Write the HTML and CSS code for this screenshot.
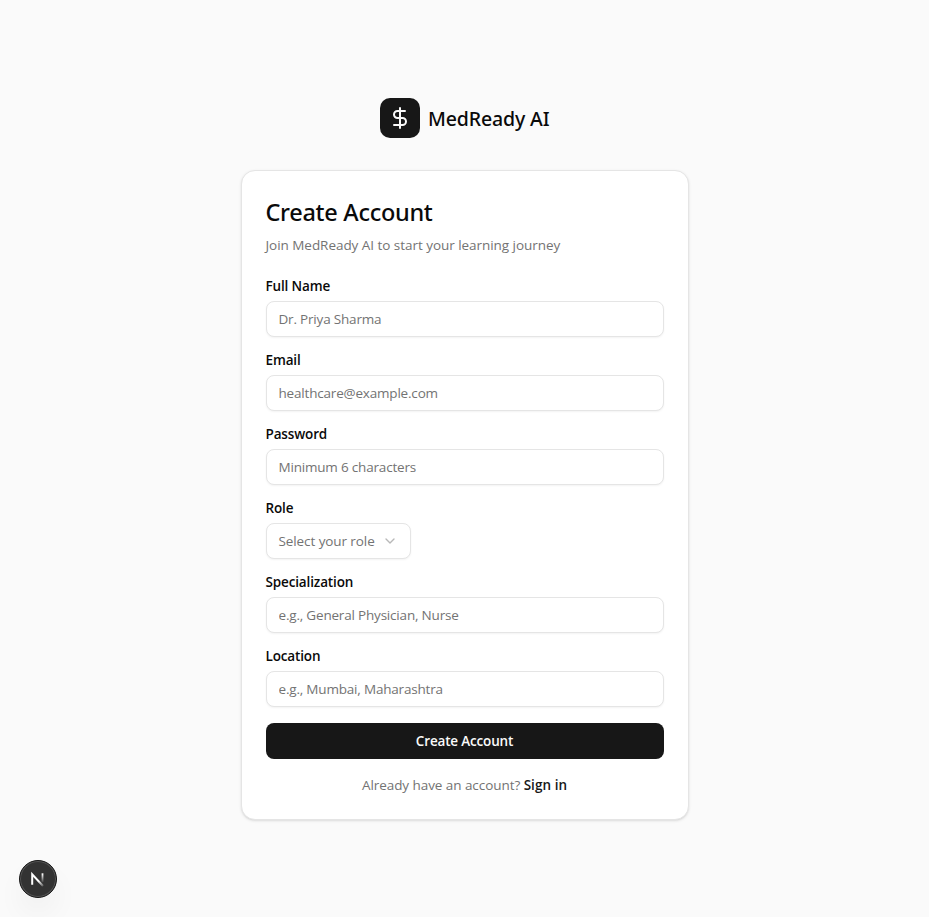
FILE: index.html
```html
<!DOCTYPE html>
<html lang="en">
<head>
<meta charset="utf-8">
<title>MedReady AI</title>
<link rel="stylesheet" href="styles.css">
</head>
<body>
<main class="page">
  <div class="brand">
    <span class="brand-mark">
      <svg width="24" height="24" viewBox="0 0 24 24" fill="none" stroke="currentColor" stroke-width="2" stroke-linecap="round" stroke-linejoin="round"><path d="M12 2v20M17 5H9.5a3.5 3.5 0 0 0 0 7h5a3.5 3.5 0 0 1 0 7H6"/></svg>
    </span>
    <span class="brand-name">MedReady AI</span>
  </div>
  <section class="card">
    <header class="card-header">
      <h1 class="title">Create Account</h1>
      <p class="description">Join MedReady AI to start your learning journey</p>
    </header>
    <form class="form">
      <div class="field">
        <label class="label" for="name">Full Name</label>
        <input class="input" id="name" type="text" placeholder="Dr. Priya Sharma">
      </div>
      <div class="field">
        <label class="label" for="email">Email</label>
        <input class="input" id="email" type="email" placeholder="healthcare@example.com">
      </div>
      <div class="field">
        <label class="label" for="password">Password</label>
        <input class="input" id="password" type="password" placeholder="Minimum 6 characters">
      </div>
      <div class="field">
        <label class="label" for="role">Role</label>
        <button class="select" id="role" type="button">
          <span>Select your role</span>
          <svg class="chevron" width="16" height="16" viewBox="0 0 24 24" fill="none" stroke="currentColor" stroke-width="2" stroke-linecap="round" stroke-linejoin="round"><path d="m6 9 6 6 6-6"/></svg>
        </button>
      </div>
      <div class="field">
        <label class="label" for="specialization">Specialization</label>
        <input class="input" id="specialization" type="text" placeholder="e.g., General Physician, Nurse">
      </div>
      <div class="field">
        <label class="label" for="location">Location</label>
        <input class="input" id="location" type="text" placeholder="e.g., Mumbai, Maharashtra">
      </div>
      <button class="submit" type="submit">Create Account</button>
    </form>
    <p class="footer">Already have an account? <a class="link" href="#">Sign in</a></p>
  </section>
</main>
<div class="dev-badge">
  <svg width="38" height="38" viewBox="0 0 38 38" fill="none">
    <defs>
      <linearGradient id="diagonal" x1="21" y1="20" x2="25" y2="25.5" gradientUnits="userSpaceOnUse"><stop stop-color="#fff"/><stop offset="1" stop-color="#fff" stop-opacity="0.2"/></linearGradient>
      <linearGradient id="stem" x1="24" y1="14" x2="24" y2="23" gradientUnits="userSpaceOnUse"><stop stop-color="#fff"/><stop offset="1" stop-color="#fff" stop-opacity="0"/></linearGradient>
    </defs>
    <path d="M13.2 24.8V14.2L24 26" stroke="url(#diagonal)" stroke-width="2"/>
    <path d="M23.5 13.3v9" stroke="url(#stem)" stroke-width="1.8"/>
  </svg>
</div>
</body>
</html>
```

FILE: styles.css
```css
* { box-sizing: border-box; }
body {
  margin: 0;
  background: #fafafa;
  color: #0a0a0a;
  font-family: "Open Sans", "Noto Sans", sans-serif;
  font-size: 13.5px;
  line-height: 20px;
}
h1, p { margin: 0; }
.page {
  display: flex;
  min-height: 917px;
  flex-direction: column;
  align-items: center;
  justify-content: center;
  gap: 32px;
}
.brand { display: flex; align-items: center; gap: 8px; }
.brand-mark {
  display: flex;
  width: 40px;
  height: 40px;
  align-items: center;
  justify-content: center;
  border-radius: 10px;
  background: #171717;
  color: #fafafa;
}
.brand-name {
  width: 121px;
  padding-top: 2px;
  font-family: "Noto Sans", sans-serif;
  font-size: 19.5px;
  font-weight: 500;
  letter-spacing: -.14px;
  line-height: 28px;
  white-space: nowrap;
}
.card {
  width: 448px;
  padding: 24px;
  border: 1px solid #e5e5e5;
  border-radius: 14px;
  background: #fff;
  box-shadow: 0 1px 3px rgba(0, 0, 0, .1), 0 1px 2px -1px rgba(0, 0, 0, .1);
}
.card-header { display: grid; gap: 7px; margin-bottom: 24px; }
.title {
  padding-top: 1px;
  font-family: "Noto Sans", sans-serif;
  font-size: 23.5px;
  font-weight: 500;
  letter-spacing: -.3px;
  line-height: 32px;
}
.description { color: #737373; letter-spacing: -.04px; }
.form, .field { display: flex; flex-direction: column; }
.form { gap: 16px; }
.field { gap: 8px; }
.label { font-weight: 600; letter-spacing: -.14px; line-height: 14px; }
.input, .select {
  height: 36px;
  margin: 0;
  border: 1px solid #e5e5e5;
  border-radius: 8px;
  background: #fff;
  color: #737373;
  font: inherit;
  letter-spacing: -.19px;
  box-shadow: 0 1px 2px rgba(0, 0, 0, .05);
}
.input { width: 100%; padding: 4px 12px; }
.input::placeholder { color: #737373; opacity: 1; }
.select {
  display: flex;
  width: 145px;
  padding: 0 12px;
  align-items: center;
  justify-content: space-between;
  letter-spacing: -.09px;
  white-space: nowrap;
}
.chevron { opacity: .5; }
.submit {
  height: 36px;
  border: 0;
  border-radius: 8px;
  background: #171717;
  color: #fafafa;
  font: inherit;
  font-weight: 600;
  letter-spacing: -.17px;
}
.footer { margin-top: 16px; color: #737373; letter-spacing: -.06px; text-align: center; }
.link { color: #171717; font-weight: 600; letter-spacing: .05px; text-decoration: none; }
.dev-badge {
  position: fixed;
  bottom: 19px;
  left: 19px;
  width: 38px;
  height: 38px;
  border: 1px solid #171717;
  border-radius: 50%;
  background: #333;
  box-shadow: inset 0 0 0 1px #555, 0 16px 32px -8px rgba(0, 0, 0, .12);
}
.dev-badge svg { display: block; margin: -1px; }
```
